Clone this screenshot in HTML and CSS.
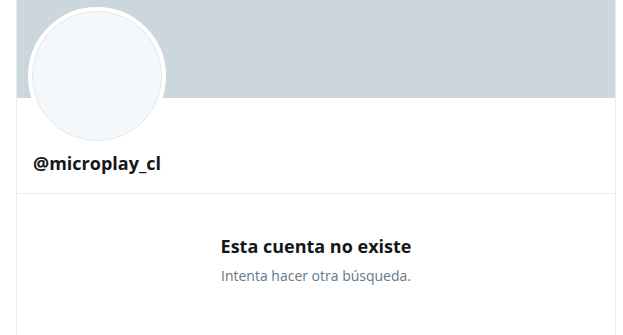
FILE: index.html
```html
<!DOCTYPE html>
<html lang="es">
<head>
    <meta charset="UTF-8">
    <meta name="viewport" content="width=device-width, initial-scale=1.0">
    <title>@microplay_cl</title>
    <link rel="stylesheet" href="styles.css">
</head>
<body>
    <main class="profile">
        <div class="banner"></div>
        <div class="profile-head">
            <div class="avatar"></div>
            <h2 class="handle">@microplay_cl</h2>
        </div>
        <div class="empty">
            <h3>Esta cuenta no existe</h3>
            <p>Intenta hacer otra búsqueda.</p>
        </div>
    </main>
</body>
</html>
```

FILE: styles.css
```css
body {
    font-family: "Open Sans", "Noto Sans", sans-serif;
    margin: 0;
    padding: 0;
    background-color: #ffffff;
    color: #14171a;
}
.profile {
    width: 598px;
    margin-left: 16px;
    min-height: 335px;
    border-left: 1px solid #e6ecf0;
    border-right: 1px solid #e6ecf0;
}
.banner {
    height: 98px;
    background-color: #ccd6dd;
}
.profile-head {
    position: relative;
    padding: 53px 16px 0;
    height: 42px;
    border-bottom: 1px solid #e6ecf0;
}
.avatar {
    position: absolute;
    left: 11px;
    top: -91px;
    width: 130px;
    height: 130px;
    border-radius: 50%;
    background-color: #f5f8fa;
    border: 4px solid #ffffff;
    box-shadow: inset 0 0 0 1px #e1e8ed;
}
.handle {
    margin: 0;
    font-size: 18px;
    font-weight: 700;
    line-height: 24px;
}
.empty {
    text-align: center;
    padding-top: 40px;
}
.empty h3 {
    margin: 0;
    font-size: 18px;
    font-weight: 700;
    line-height: 24px;
}
.empty p {
    margin: 8px 0 0;
    font-size: 14px;
    color: #657786;
    line-height: 20px;
}
```
